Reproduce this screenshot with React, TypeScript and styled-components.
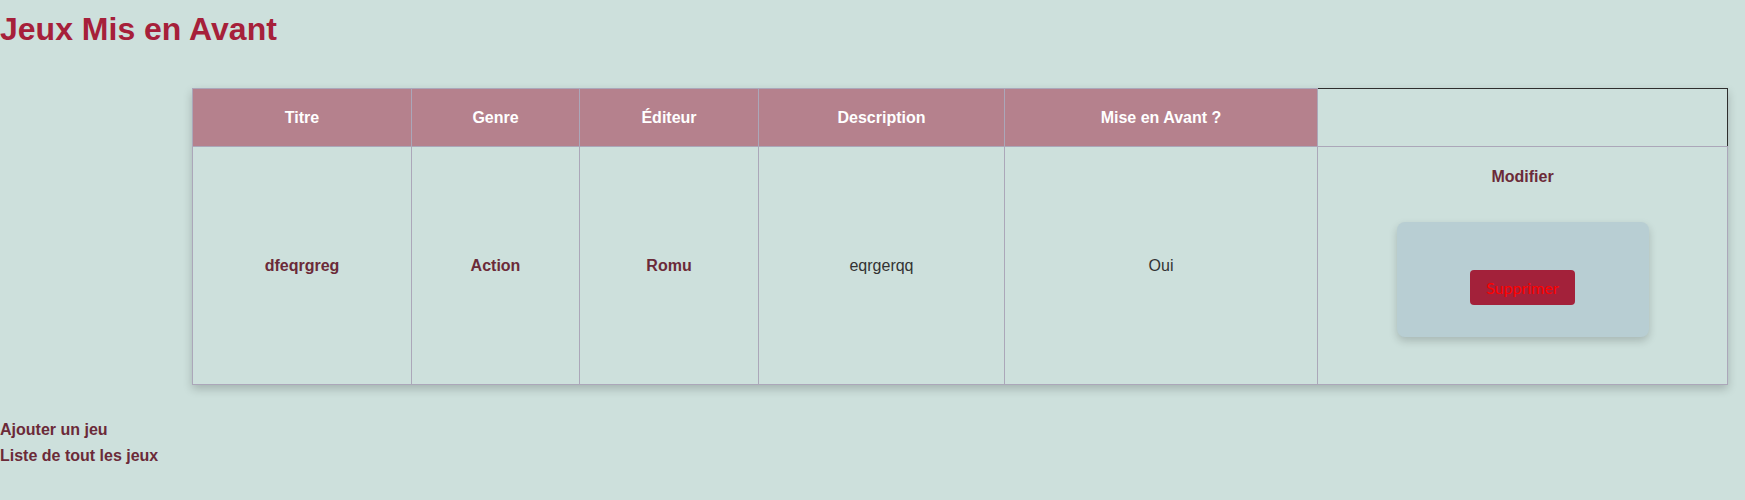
import React from "react";
import styled, { createGlobalStyle } from "styled-components";

const GlobalStyle = createGlobalStyle`
  html, body {
    margin: 0;
    padding: 0;
    background: #cde0dc;
    font-family: "Liberation Sans", Arial, sans-serif;
  }
`;

const Page = styled.div`
  display: flex;
  flex-direction: column;
  align-items: flex-start;
`;

const Title = styled.h1`
  margin: 11px 0 0;
  font-size: 32px;
  line-height: 37px;
  font-weight: bold;
  color: #a6203a;
`;

const Table = styled.table`
  margin: 40px 0 0 192px;
  width: 1536px;
  table-layout: fixed;
  border-collapse: collapse;
  border: 1px solid #aba7b9;
  box-shadow: 0 4px 9px rgba(0, 0, 0, 0.2);
`;

const HeadCell = styled.th<{ $empty?: boolean }>`
  height: 57px;
  padding: 0;
  background: ${(p) => (p.$empty ? "transparent" : "#b5818d")};
  color: #ffffff;
  font-size: 16px;
  font-weight: bold;
  text-align: center;
  vertical-align: middle;
  border: 1px solid #aba7b9;
  ${(p) =>
    p.$empty &&
    `
    border-top: 1px solid #2e2e2e;
    border-right: 1px solid #2e2e2e;
  `}
`;

const Cell = styled.td<{ $strong?: boolean }>`
  height: 237px;
  padding: 0;
  text-align: center;
  vertical-align: middle;
  font-size: 16px;
  font-weight: ${(p) => (p.$strong ? "bold" : "normal")};
  color: ${(p) => (p.$strong ? "#6b2a38" : "#333333")};
  border: 1px solid #aba7b9;
`;

const ActionCell = styled.td`
  height: 216px;
  padding: 21px 0 0;
  text-align: center;
  vertical-align: top;
  border: 1px solid #aba7b9;
`;

const EditLink = styled.a`
  display: block;
  font-size: 16px;
  line-height: 18px;
  font-weight: bold;
  color: #6b2a38;
  text-decoration: none;
  margin-bottom: 36px;
  cursor: pointer;
`;

const DeleteCard = styled.form`
  box-sizing: border-box;
  width: 252px;
  height: 115px;
  margin: 0 auto;
  padding-top: 48px;
  display: flex;
  justify-content: center;
  align-items: flex-start;
  background: #b8ced3;
  border-radius: 8px;
  box-shadow: 0 4px 8px rgba(0, 0, 0, 0.18);
`;

const DeleteButton = styled.button`
  height: 35px;
  min-width: 105px;
  padding: 0 16px;
  border: none;
  border-radius: 4px;
  background: #a3213a;
  color: #ff0000;
  font-family: Lato, "Noto Sans", sans-serif;
  font-size: 16px;
  cursor: pointer;
`;

const Links = styled.nav`
  display: flex;
  flex-direction: column;
  margin-top: 32px;
`;

const NavLink = styled.a`
  font-size: 16px;
  line-height: 26px;
  font-weight: bold;
  color: #6b2a38;
  text-decoration: none;
  cursor: pointer;
`;

const widths = [219, 168, 179, 246, 313, 410];

export default function App() {
  return (
    <>
      <GlobalStyle />
      <Page>
        <Title>Jeux Mis en Avant</Title>
        <Table>
          <colgroup>
            {widths.map((w, i) => (
              <col key={i} style={{ width: w }} />
            ))}
          </colgroup>
          <thead>
            <tr>
              <HeadCell>Titre</HeadCell>
              <HeadCell>Genre</HeadCell>
              <HeadCell>Éditeur</HeadCell>
              <HeadCell>Description</HeadCell>
              <HeadCell>Mise en Avant ?</HeadCell>
              <HeadCell $empty />
            </tr>
          </thead>
          <tbody>
            <tr>
              <Cell $strong>dfeqrgreg</Cell>
              <Cell $strong>Action</Cell>
              <Cell $strong>Romu</Cell>
              <Cell>eqrgerqq</Cell>
              <Cell>Oui</Cell>
              <ActionCell>
                <EditLink>Modifier</EditLink>
                <DeleteCard onSubmit={(e) => e.preventDefault()}>
                  <DeleteButton type="submit">Supprimer</DeleteButton>
                </DeleteCard>
              </ActionCell>
            </tr>
          </tbody>
        </Table>
        <Links>
          <NavLink>Ajouter un jeu</NavLink>
          <NavLink>Liste de tout les jeux</NavLink>
        </Links>
      </Page>
    </>
  );
}
